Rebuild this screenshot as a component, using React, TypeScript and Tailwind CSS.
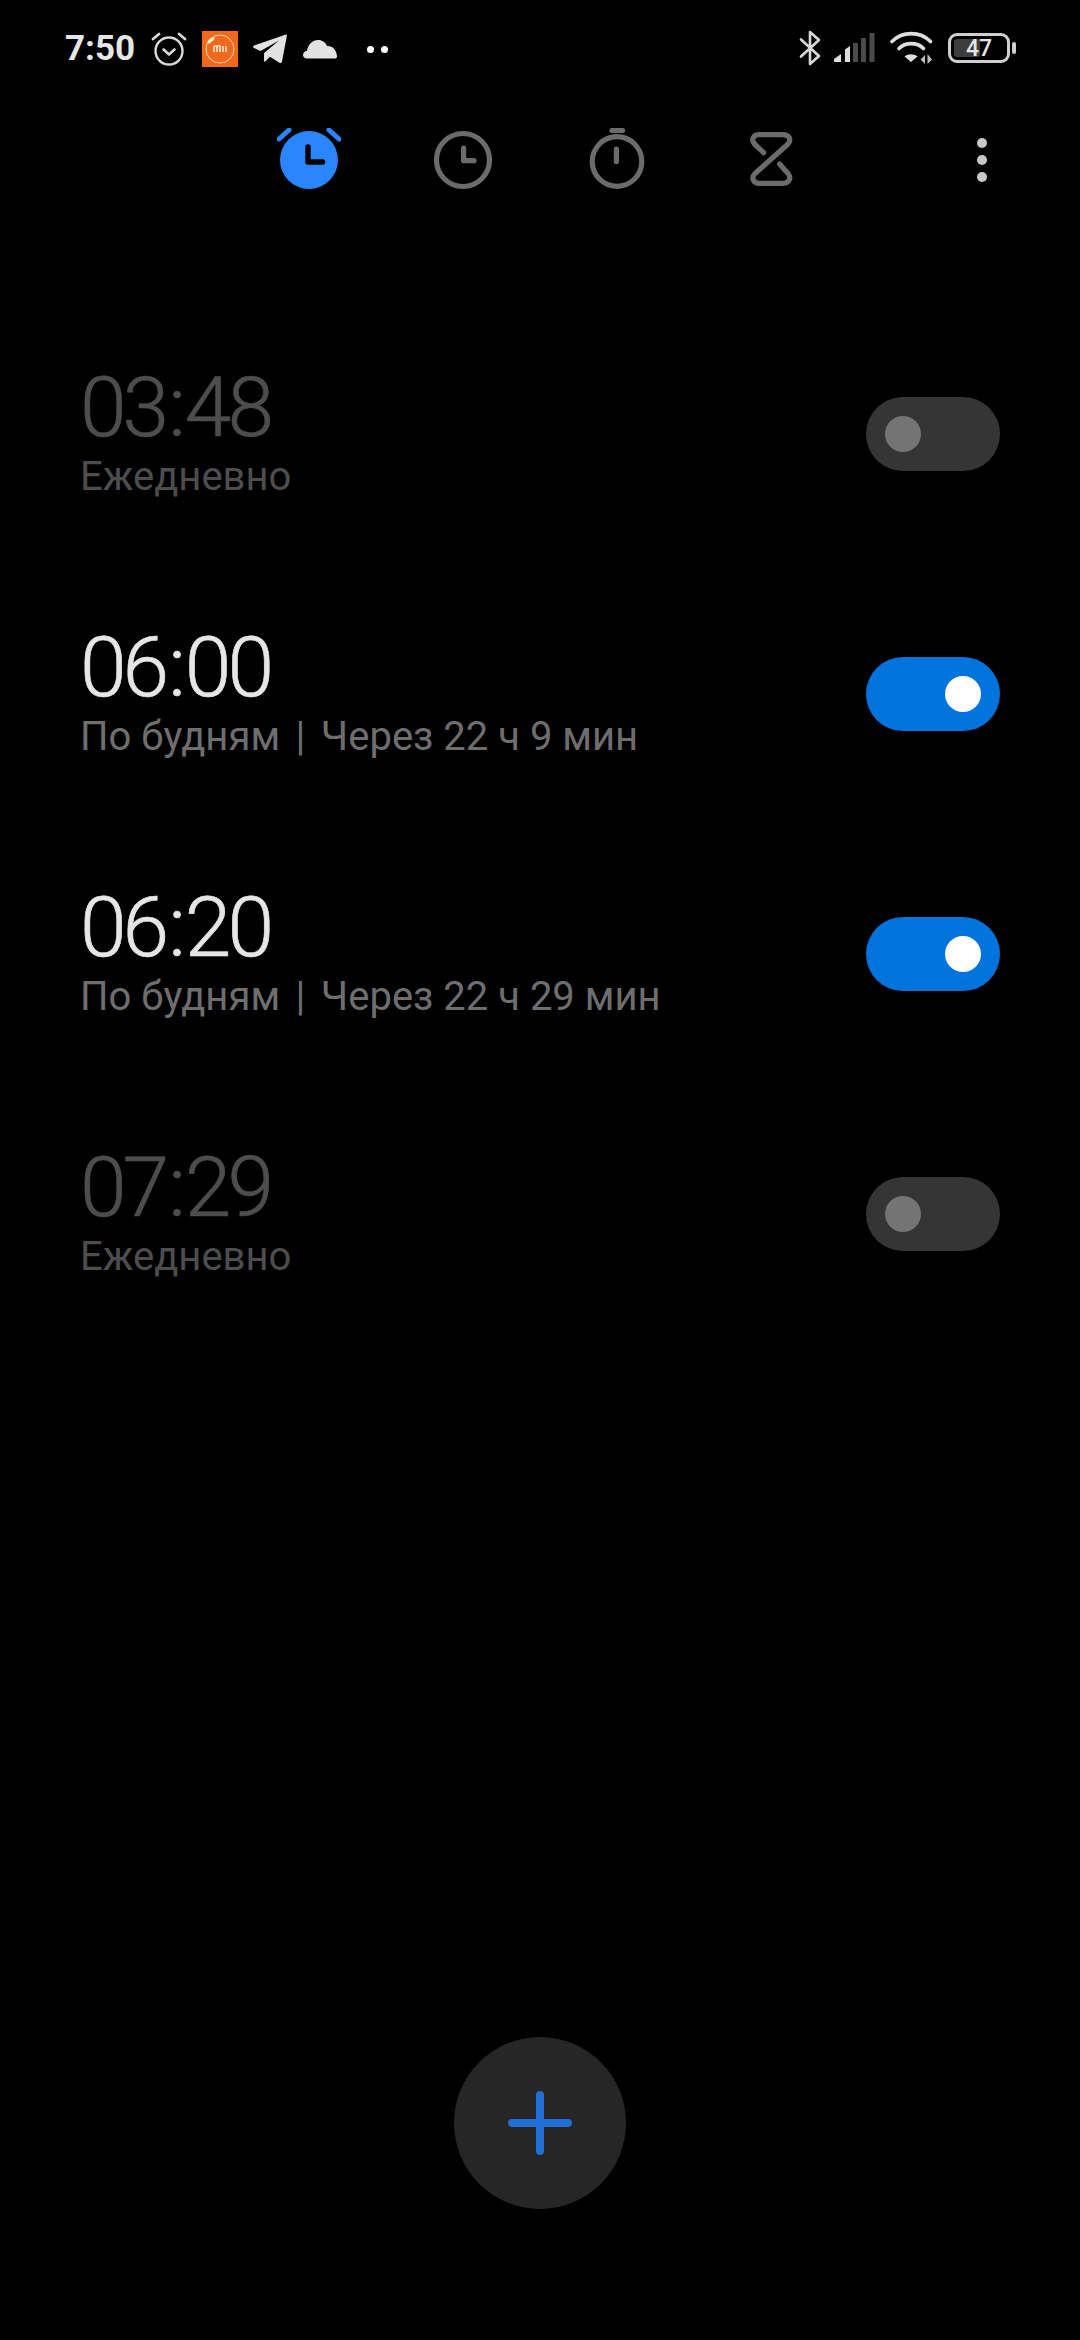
const alarms = [
  { h: "03", m: "48", sub: ["Ежедневно"], on: false },
  { h: "06", m: "00", sub: ["По будням", "Через 22 ч 9 мин"], on: true },
  { h: "06", m: "20", sub: ["По будням", "Через 22 ч 29 мин"], on: true },
  { h: "07", m: "29", sub: ["Ежедневно"], on: false },
];

function Toggle({ on }: { on: boolean }) {
  return (
    <div className={`flex h-[74px] w-[134px] shrink-0 items-center rounded-full ${on ? "justify-end bg-[#0073dd] pr-[19px]" : "justify-start bg-[#353535] pl-[19px]"}`}>
      <div className={`h-9 w-9 rounded-full ${on ? "bg-white" : "bg-[#747474]"}`} />
    </div>
  );
}

function AlarmRow({ h, m, sub, on }: { h: string; m: string; sub: string[]; on: boolean }) {
  return (
    <div className="flex h-[260px] items-center justify-between pl-[80px] pr-[80px]">
      <div className="flex flex-col pb-[4px]">
        <div className={`flex h-[90px] text-[84px] font-light leading-[90px] tracking-[-4px] [-webkit-text-stroke:0.6px] ${on ? "text-[#e6e6e6]" : "text-[#4d4d4d]"}`}>
          <span>{h}</span>
          <span className="mx-[3px]">:</span>
          <span>{m}</span>
        </div>
        <div className={`flex h-[48px] whitespace-nowrap text-[40px] leading-[48px] ${on ? "text-[#6e6e6e]" : "text-[#4d4d4d]"}`}>
          <span>{sub[0]}</span>
          {sub[1] && <span className="mx-[15.5px]">|</span>}
          {sub[1] && <span>{sub[1]}</span>}
        </div>
      </div>
      <Toggle on={on} />
    </div>
  );
}

function StatusBar() {
  return (
    <div className="flex h-[96px] items-start justify-between pl-[65px] pr-[64px] pt-[30px]">
      <div className="flex items-center">
        <span className="text-[35px] font-bold leading-[38px] text-[#e6e6e6]">7:50</span>
        <svg className="ml-[16px]" width="36" height="36" viewBox="0 0 36 36" fill="none" stroke="#d8d8d8" strokeLinecap="round" strokeLinejoin="round">
          <circle cx="18" cy="20" r="13.5" strokeWidth="2.4" />
          <path d="M12.5 18.5l5.500 5 5.500-5" strokeWidth="2.6" />
          <path d="M2 8l6-5M34 8l-6-5" strokeWidth="2.8" />
        </svg>
        <svg className="ml-[15px]" width="36" height="36" viewBox="0 0 36 36" fill="none">
          <rect width="36" height="36" fill="#f2691e" />
          <circle cx="18" cy="18" r="14" stroke="#ffd9a8" strokeWidth="1" />
          <path d="M7 11l4-3.5" stroke="#fff0d0" strokeWidth="3" strokeLinecap="round" />
          <path d="M12 15h6v6M12 15v6M15 15v6M21 15v6M24 15v6" stroke="#ffe8cc" strokeWidth="1.6" />
        </svg>
        <svg className="ml-[15px]" width="34" height="30" viewBox="0 0 34 30" fill="#e2e2e2">
          <path d="M33 0.5c0.6 0 1 0.5 0.9 1.2L29 27.5c-0.3 1.4-1.4 1.9-2.6 1.2l-9.5-6-4.6 4.7c-0.6 0.5-1.4 0.2-1.4-0.6l0.2-7.8L26 6.5 7.5 17 1 14c-1.2-0.6-1.2-1.8 0-2.4z" />
        </svg>
        <svg className="ml-[16px]" width="34" height="20" viewBox="0 0 34 20" fill="#e2e2e2">
          <path d="M4 19.500C1 19.500 0 17.500 0 16c0-2.300 1.600-3.800 4-4.200C5 5.500 9.500 1 15 1c4.500 0 7.500 2.500 9 6 5-0.500 9.500 3.500 10 10 0.100 1.700-0.800 2.500-2 2.500z" />
        </svg>
        <div className="ml-[30px] h-[7px] w-[7px] rounded-full bg-white" />
        <div className="ml-[7px] h-[7px] w-[7px] rounded-full bg-white" />
      </div>
      <div className="flex items-center">
        <svg width="22" height="36" viewBox="0 0 22 36" fill="none" stroke="#d8d8d8" strokeWidth="2.6" strokeLinecap="round" strokeLinejoin="round">
          <path d="M2 9.500l18 16.500-9 8V2l9 8L2 26.500" />
        </svg>
        <svg className="ml-[13px]" width="42" height="30" viewBox="0 0 42 30">
          <path d="M0 29v-3l7-5v8z" fill="#dedede" />
          <path d="M11 29V16.500l5-3.500v16z" fill="#dedede" />
          <rect x="19" y="10" width="5" height="19" fill="#4a4a4a" />
          <rect x="27" y="5" width="5" height="24" fill="#4a4a4a" />
          <rect x="35.500" y="0" width="5" height="29" fill="#4a4a4a" />
        </svg>
        <svg className="ml-[14px]" width="46" height="34" viewBox="0 0 46 34" fill="none">
          <path d="M2 10.500C12.500 0 30 0 40.500 10.500" stroke="#dedede" strokeWidth="3.600" strokeLinecap="round" />
          <path d="M9 17.500C15.500 11 27 11 33.500 17.500" stroke="#dedede" strokeWidth="3.600" strokeLinecap="round" />
          <path d="M21 31l-6.500-5.500c3.500-3 9.500-3 13 0z" fill="#dedede" />
          <path d="M35 24v9l-4.500-4.500zM37.500 33v-10l4.500 5.500z" fill="#bdbdbd" />
        </svg>
        <div className="relative ml-[12px] flex h-[30px] w-[62px] items-center rounded-[9px] border-[3px] border-[#cfcfcf] p-[3px]">
          <div className="h-full w-[26px] rounded-[3px] bg-[#3c3c3c]" />
          <span className="absolute inset-0 flex items-center justify-center text-[23px] font-medium leading-none text-[#e6e6e6]">47</span>
        </div>
        <div className="ml-[2px] h-[12px] w-[4px] rounded-full bg-[#cfcfcf]" />
      </div>
    </div>
  );
}

function TabBar() {
  return (
    <div className="relative flex h-[130px] items-start pl-[277px] pt-[32px]">
      <div className="flex items-center gap-[90px]">
        <svg width="64" height="70" viewBox="0 0 64 70" fill="none">
          <circle cx="32" cy="32" r="29" fill="#2a86ff" />
          <path d="M2 11l10-9M62 11l-10-9" stroke="#2a86ff" strokeWidth="5" strokeLinecap="round" />
          <path d="M31 19v15h14.500" stroke="#000" strokeWidth="5.500" strokeLinecap="round" strokeLinejoin="round" />
        </svg>
        <svg width="64" height="70" viewBox="0 0 64 70" fill="none" stroke="#6b6b6b" strokeWidth="5.200" strokeLinecap="round" strokeLinejoin="round">
          <circle cx="32" cy="32" r="26.500" />
          <path d="M32.600 20v12.700h10.400" />
        </svg>
        <svg width="64" height="70" viewBox="0 0 64 70" fill="none" stroke="#6b6b6b" strokeWidth="5.200" strokeLinecap="round">
          <circle cx="32" cy="33.500" r="24.800" />
          <path d="M31.400 21v12.500M27 2.500h10.500" />
        </svg>
        <svg width="64" height="70" viewBox="0 0 64 70" fill="none" stroke="#6b6b6b" strokeWidth="5.200" strokeLinecap="round" strokeLinejoin="round">
          <path d="M24.600 24.700L15.500 16C11.500 11 15 6.700 20 6.700H44C49.500 6.700 53 11 49 16L16 45.500C11.500 50.500 15 55.300 20 55.300H44C49.500 55.300 53 50.500 49 45.500L40.600 36" />
        </svg>
      </div>
      <div className="absolute right-[93px] top-[42px] flex flex-col gap-[7px]">
        <div className="h-[10px] w-[10px] rounded-full bg-[#c8c8c8]" />
        <div className="h-[10px] w-[10px] rounded-full bg-[#c8c8c8]" />
        <div className="h-[10px] w-[10px] rounded-full bg-[#c8c8c8]" />
      </div>
    </div>
  );
}

export default function App() {
  return (
    <div className="flex h-[2340px] w-[1080px] flex-col overflow-hidden bg-black font-['Roboto',sans-serif]">
      <StatusBar />
      <TabBar />
      <div className="flex-1 pt-[78px]">
        {alarms.map((a, i) => (
          <AlarmRow key={i} {...a} />
        ))}
      </div>
      <div className="flex justify-center pb-[131px]">
        <div className="flex h-[172px] w-[172px] items-center justify-center rounded-full bg-[#262626]">
          <svg width="64" height="64" viewBox="0 0 64 64" stroke="#1f6fd6" strokeWidth="8" strokeLinecap="round">
            <path d="M32 4v56M4 32h56" />
          </svg>
        </div>
      </div>
    </div>
  );
}
